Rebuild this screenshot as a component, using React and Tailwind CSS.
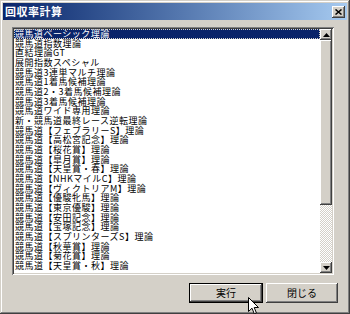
import React from 'react';

const items = [
  '競馬道ベーシック理論',
  '競馬道指数理論',
  '直結理論GT',
  '展開指数スペシャル',
  '競馬道3連単マルチ理論',
  '競馬道1着馬候補理論',
  '競馬道2・3着馬候補理論',
  '競馬道3着馬候補理論',
  '競馬道ワイド専用理論',
  '新・競馬道最終レース逆転理論',
  '競馬道【フェブラリーS】理論',
  '競馬道【高松宮記念】理論',
  '競馬道【桜花賞】理論',
  '競馬道【皐月賞】理論',
  '競馬道【天皇賞・春】理論',
  '競馬道【NHKマイルC】理論',
  '競馬道【ヴィクトリアM】理論',
  '競馬道【優駿牝馬】理論',
  '競馬道【東京優駿】理論',
  '競馬道【安田記念】理論',
  '競馬道【宝塚記念】理論',
  '競馬道【スプリンターズS】理論',
  '競馬道【秋華賞】理論',
  '競馬道【菊花賞】理論',
  '競馬道【天皇賞・秋】理論',
];

const raised =
  'bg-[#d4d0c8] shadow-[inset_-1px_-1px_#404040,inset_1px_1px_#fff,inset_-2px_-2px_#808080,inset_2px_2px_#d4d0c8]';

function Arrow({ up }) {
  return (
    <div className={`h-[11px] flex items-center justify-center ${raised}`}>
      <svg width="7" height="4" viewBox="0 0 7 4">
        {up ? <path d="M3.5 0L7 4H0z" fill="#000" /> : <path d="M0 0h7L3.5 4z" fill="#000" />}
      </svg>
    </div>
  );
}

export default function App() {
  return (
    <div className="relative overflow-hidden w-[350px] h-[314px] p-[3px] bg-[#d4d0c8] shadow-[inset_-1px_-1px_#404040,inset_1px_1px_#d4d0c8,inset_-2px_-2px_#808080,inset_2px_2px_#fff] font-['Noto_Sans_CJK_JP',sans-serif] flex flex-col">
      {/* title bar */}
      <div className="h-[17px] flex items-center justify-between pl-[2px] pr-[2px] bg-gradient-to-r from-[#0a246a] to-[#a6caf0]">
        <span className="text-white text-[11px] font-bold leading-none tracking-[0.5px]">回収率計算</span>
        <div className={`w-[13px] h-[12px] flex items-center justify-center ${raised}`}>
          <svg width="7" height="6" viewBox="0 0 7 6">
            <path d="M0.5 0.5L6.5 5.5M6.5 0.5L0.5 5.5" stroke="#000" strokeWidth="1.5" />
          </svg>
        </div>
      </div>

      {/* list box */}
      <div className="ml-[9px] mt-[7px] w-[322px] h-[248px] p-[2px] bg-white shadow-[inset_1px_1px_#808080,inset_-1px_-1px_#fff,inset_2px_2px_#404040,inset_-2px_-2px_#d4d0c8] flex">
        <div className="flex-1 overflow-hidden">
          {items.map((t, i) => (
            <div
              key={t}
              className={`h-[9.68px] pl-[1px] text-[9px] tracking-[0.5px] leading-[9.68px] whitespace-nowrap ${
                i === 0 ? 'bg-[#0a246a] text-white outline-1 outline-dotted outline-[#d4d0c8] -outline-offset-1' : 'text-black'
              }`}
            >
              {t}
            </div>
          ))}
        </div>
        <div className="w-[12px] flex flex-col bg-[repeating-conic-gradient(#fff_0_25%,#d4d0c8_0_50%)] bg-[length:2px_2px]">
          <Arrow up />
          <div className={`h-[165px] ${raised}`} />
          <div className="flex-1" />
          <Arrow />
        </div>
      </div>

      {/* buttons */}
      <div className="mt-[8px] flex justify-end gap-[3px] pr-[9px]">
        <button className="w-[74px] h-[20px] bg-[#d4d0c8] border border-black shadow-[inset_-1px_-1px_#404040,inset_1px_1px_#fff,inset_-2px_-2px_#808080] text-[10px] leading-none text-black">
          実行
        </button>
        <button className={`w-[72px] h-[20px] text-[10px] leading-none text-black ${raised}`}>閉じる</button>
      </div>

      {/* mouse cursor */}
      <svg className="absolute left-[248px] top-[297px]" width="11" height="18" viewBox="0 0 11 18">
        <path d="M0.5 0.5V14.5L4 11.2L6.3 16.8L8.4 15.9L6.2 10.5H10.5Z" fill="#fff" stroke="#000" strokeWidth="1" />
      </svg>
    </div>
  );
}
